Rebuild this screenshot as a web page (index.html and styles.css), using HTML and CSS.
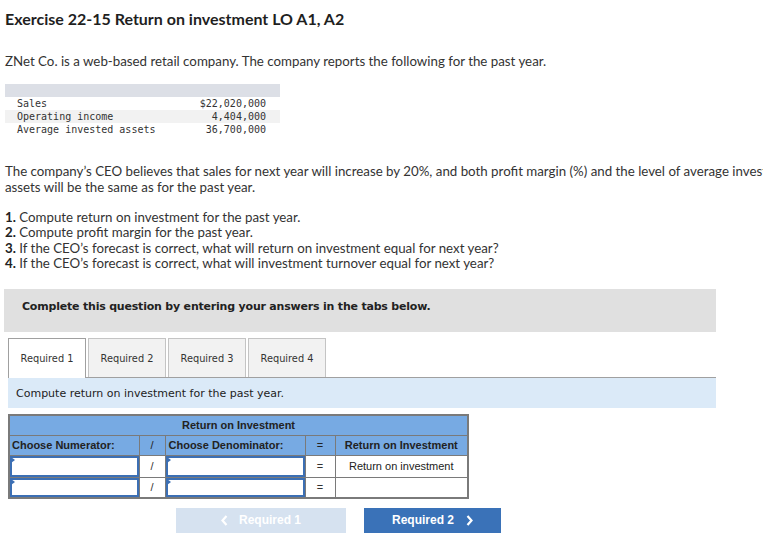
FILE: index.html
```html
<!DOCTYPE html>
<html>
<head>
<meta charset="utf-8">
<link rel="stylesheet" href="styles.css">
</head>
<body>
<div class="page">
  <h1 class="title">Exercise 22-15 Return on investment LO A1, A2</h1>
  <p class="intro">ZNet Co. is a web-based retail company. The company reports the following for the past year.</p>

  <div class="data">
    <div class="data-head"></div>
    <div class="data-row"><span>Sales</span><span>$22,020,000</span></div>
    <div class="data-row alt"><span>Operating income</span><span>4,404,000</span></div>
    <div class="data-row"><span>Average invested assets</span><span>36,700,000</span></div>
  </div>

  <p class="ceo">The company’s CEO believes that sales for next year will increase by 20%, and both profit margin (%) and the level of average invested assets will be the same as for the past year.</p>

  <ol class="reqs">
    <li><b>1.</b> Compute return on investment for the past year.</li>
    <li><b>2.</b> Compute profit margin for the past year.</li>
    <li><b>3.</b> If the CEO’s forecast is correct, what will return on investment equal for next year?</li>
    <li><b>4.</b> If the CEO’s forecast is correct, what will investment turnover equal for next year?</li>
  </ol>

  <div class="notice">Complete this question by entering your answers in the tabs below.</div>

  <div class="tabs">
    <div class="tab active">Required 1</div>
    <div class="tab">Required 2</div>
    <div class="tab">Required 3</div>
    <div class="tab">Required 4</div>
  </div>
  <div class="prompt">Compute return on investment for the past year.</div>

  <table class="roi">
    <colgroup>
      <col class="w-num"><col class="w-op"><col class="w-den"><col class="w-eq"><col class="w-res">
    </colgroup>
    <tr class="h1row"><th colspan="5">Return on Investment</th></tr>
    <tr class="h2row">
      <th class="c-num">Choose Numerator:</th>
      <th class="c-op">/</th>
      <th class="c-den">Choose Denominator:</th>
      <th class="c-eq">=</th>
      <th class="c-res">Return on Investment</th>
    </tr>
    <tr class="r1">
      <td class="inp"><div class="box"><span class="tri"></span></div></td>
      <td class="op">/</td>
      <td class="inp"><div class="box"><span class="tri"></span></div></td>
      <td class="op">=</td>
      <td class="res">Return on investment</td>
    </tr>
    <tr class="r2">
      <td class="inp"><div class="box"><span class="tri"></span></div></td>
      <td class="op">/</td>
      <td class="inp"><div class="box"><span class="tri"></span></div></td>
      <td class="op">=</td>
      <td class="res"></td>
    </tr>
  </table>

  <div class="nav">
    <div class="btn prev"><svg class="chev left" width="7" height="11" viewBox="0 0 7 11"><path d="M5.5 1 L1.5 5.5 L5.5 10" fill="none" stroke="#fff" stroke-width="2.2"/></svg>Required 1</div>
    <div class="btn next">Required 2<svg class="chev right" width="7" height="11" viewBox="0 0 7 11"><path d="M1.5 1 L5.5 5.5 L1.5 10" fill="none" stroke="#fff" stroke-width="2.2"/></svg></div>
  </div>
</div>
</body>
</html>
```

FILE: styles.css
```css
html, body {
  margin: 0;
  padding: 0;
  overflow: hidden;
  background: #fff;
}
body {
  font-family: "Lato", "Liberation Sans", sans-serif;
  color: #333;
}
.page {
  padding: 0 0 0 5px;
  width: 820px;
}
.title {
  font-size: 16px;
  font-weight: 700;
  color: #1f1f1f;
  margin: 0;
  padding-top: 9px;
  line-height: 20px;
}
.intro {
  font-size: 13.3px;
  margin: 24px 0 0;
  line-height: 16px;
}
.data {
  margin-top: 15px;
  width: 275px;
  font-family: "DejaVu Sans Mono", "Liberation Mono", monospace;
  font-size: 10px;
  color: #333;
}
.data-head {
  height: 13px;
  background: #dcdfe6;
}
.data-row {
  display: flex;
  justify-content: space-between;
  padding: 0 14px 0 12px;
  height: 13px;
  line-height: 13px;
}
.data-row.alt { background: #f2f2f2; }
.ceo {
  font-size: 13.3px;
  line-height: 15.5px;
  margin: 28px 0 0;
  width: 800px;
}
.reqs {
  list-style: none;
  padding: 0;
  margin: 15px 0 0;
  font-size: 13.3px;
  line-height: 15.3px;
}
.reqs b { color: #222; }
.notice {
  margin-top: 18px;
  width: 712px;
  box-sizing: border-box;
  margin-left: -1px;
  height: 43px;
  background: #e0e0e0;
  font-family: "DejaVu Sans", Verdana, sans-serif;
  font-weight: 700;
  font-size: 11px;
  color: #222;
  padding: 11px 0 0 18px;
  letter-spacing: -0.2px;
}
.tabs {
  display: flex;
  margin-top: 6px;
  margin-left: 3px;
  width: 708px;
  border-bottom: 1px solid #a0a0a0;
  height: 39px;
}
.tab {
  box-sizing: border-box;
  height: 39px;
  margin-right: 2px;
  border: 1px solid #c4c4c4;
  border-bottom: none;
  background: #f2f2f2;
  font-family: "DejaVu Sans", Verdana, sans-serif;
  font-size: 9.8px;
  color: #333;
  display: flex;
  align-items: center;
  justify-content: center;
  white-space: nowrap;
  width: 78px;
}
.tab.active {
  background: #fff;
  border-color: #a0a0a0;
  height: 40px;
  position: relative;
  z-index: 1;
}
.prompt {
  margin-left: 3px;
  width: 708px;
  height: 30px;
  box-sizing: border-box;
  background: #dbeaf8;
  font-family: "DejaVu Sans", Verdana, sans-serif;
  font-size: 11px;
  color: #222;
  padding: 9px 0 0 8px;
}
.roi {
  margin-top: 6px;
  margin-left: 3px;
  border-collapse: collapse;
  table-layout: fixed;
  width: 459px;
  font-family: "Liberation Sans", Arial, sans-serif;
  font-size: 11px;
  color: #222;
  border: 2px solid #7a7a7a;
}
.w-num { width: 130px; }
.w-op { width: 26px; }
.w-den { width: 140px; }
.w-eq { width: 30px; }
.w-res { width: 133px; }
.roi th, .roi td {
  border: 1px solid #7a7a7a;
  padding: 0;
  box-sizing: border-box;
}
.roi th {
  background: #77aae3;
  font-weight: 700;
  height: 20px;
}
.roi .h1row th { text-align: center; }
.c-num { text-align: left; padding-left: 2px !important; }
.c-op { font-weight: 400 !important; }
.c-den { text-align: left; padding-left: 3px !important; }
.c-eq { font-weight: 400 !important; }
.roi td { background: #fff; text-align: center; }
.roi tr.r1 td { height: 22px; }
.roi tr.r2 td { height: 20px; }
.roi td.inp { vertical-align: top; }
.box {
  position: relative;
  border: 2px solid #3c6fb4;
  box-sizing: border-box;
  height: 21px;
}
.roi tr.r2 .box { height: 19px; }
.tri {
  position: absolute;
  left: -1px;
  top: -1px;
  width: 0;
  height: 0;
  border-top: 3px solid transparent;
  border-bottom: 3px solid transparent;
  border-left: 4px solid #3c6fb4;
}
.roi td.op { color: #333; }
.nav {
  display: flex;
  margin-top: 9px;
  margin-left: 171px;
  gap: 18px;
}
.btn {
  height: 25px;
  display: flex;
  align-items: center;
  justify-content: center;
  font-family: "Liberation Sans", Arial, sans-serif;
  font-weight: 700;
  font-size: 12px;
  color: #fff;
}
.btn.prev {
  width: 170px;
  background: #d6e2f0;
}
.btn.next {
  width: 137px;
  background: #3a72b8;
}
.chev.left { margin-right: 11px; }
.chev.right { margin-left: 12px; }
```
